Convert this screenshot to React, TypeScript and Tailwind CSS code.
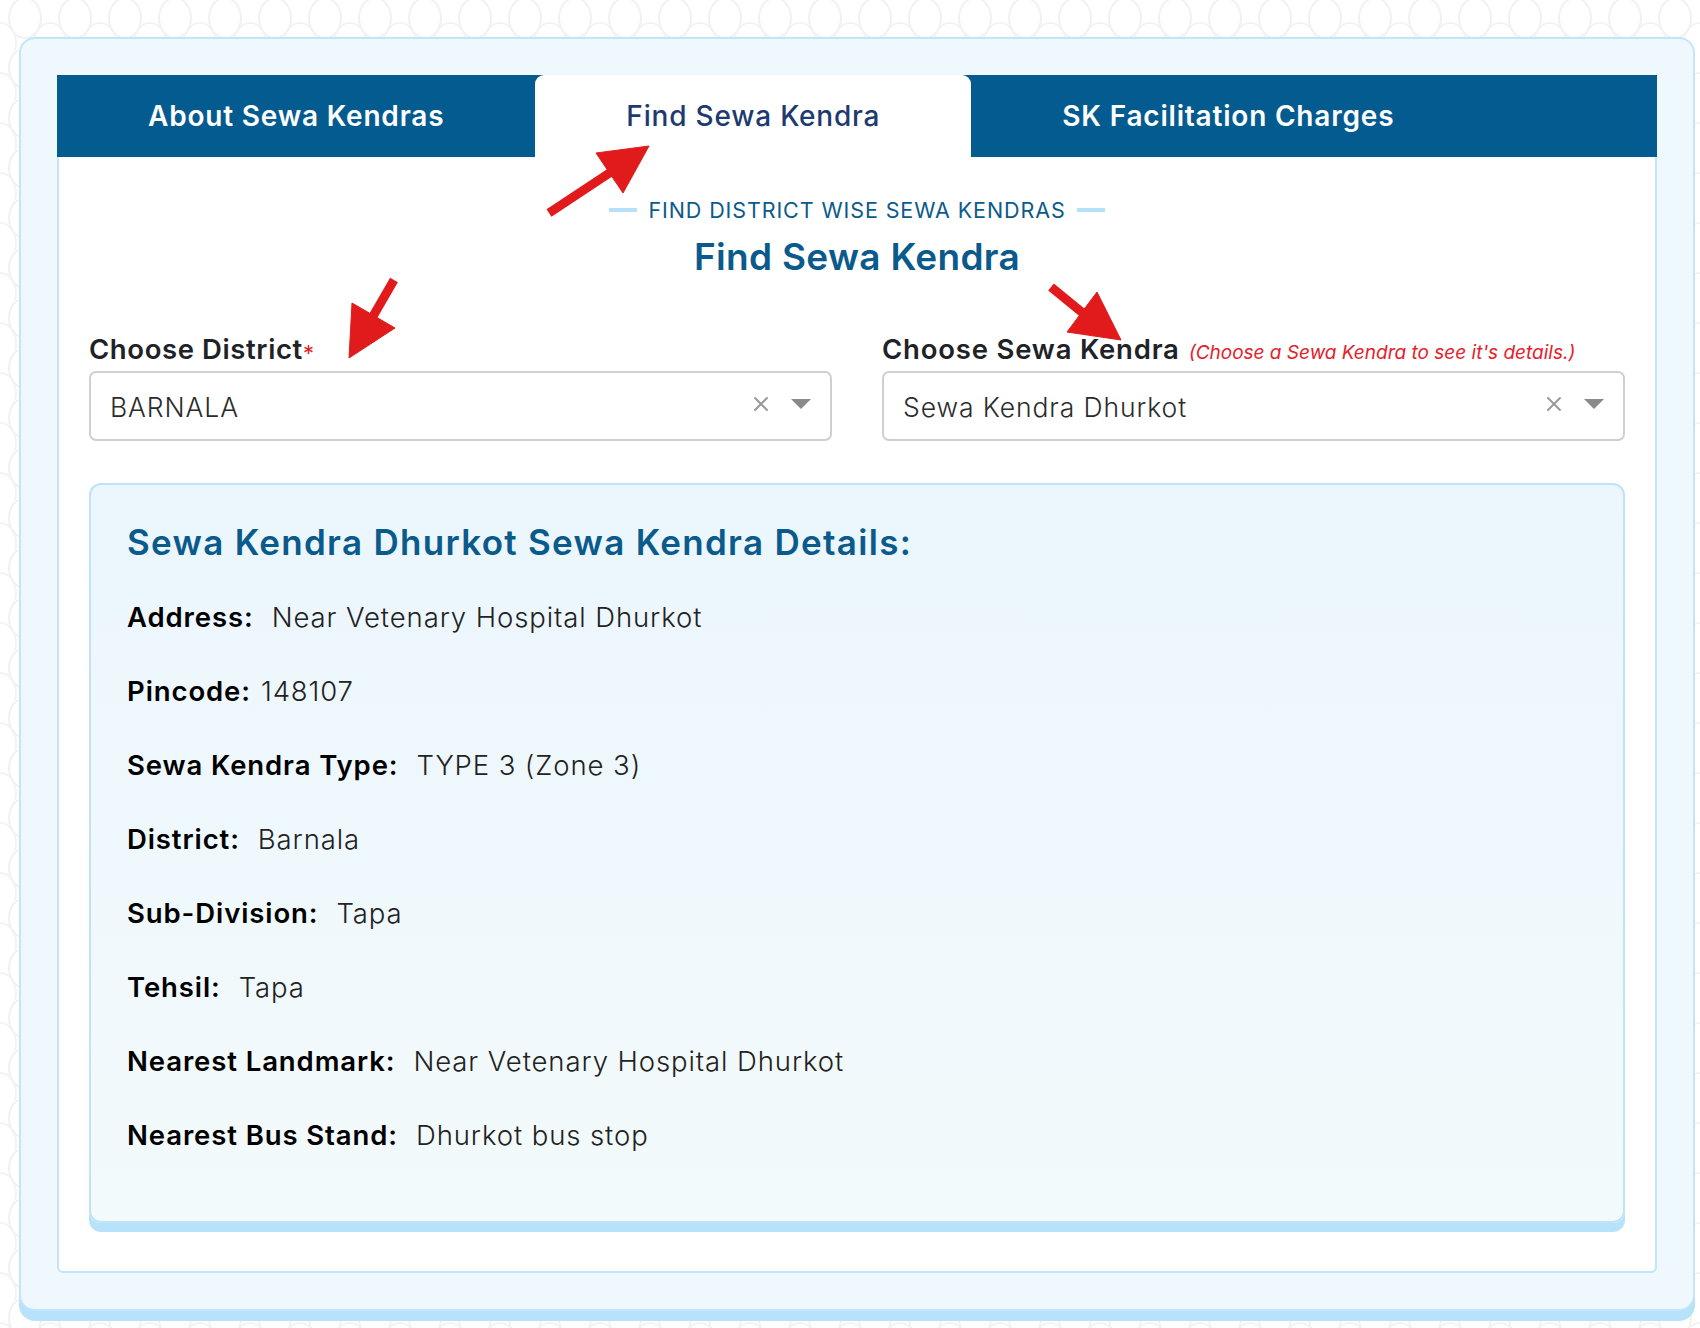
import React from 'react';

const rows = [
  { label: 'Address:', value: 'Near Vetenary Hospital Dhurkot', tight: false },
  { label: 'Pincode:', value: '148107', tight: true },
  { label: 'Sewa Kendra Type:', value: 'TYPE 3 (Zone 3)', tight: false },
  { label: 'District:', value: 'Barnala', tight: false },
  { label: 'Sub-Division:', value: 'Tapa', tight: false },
  { label: 'Tehsil:', value: 'Tapa', tight: false },
  { label: 'Nearest Landmark:', value: 'Near Vetenary Hospital Dhurkot', tight: false },
  { label: 'Nearest Bus Stand:', value: 'Dhurkot bus stop', tight: false },
];

const ClearIcon = () => (
  <svg width="16" height="16" viewBox="0 0 16 16" className="shrink-0">
    <path d="M2 2 L14 14 M14 2 L2 14" stroke="#9a9a9a" strokeWidth="2" strokeLinecap="round" />
  </svg>
);

const Caret = () => (
  <svg width="20" height="10" viewBox="0 0 20 10" className="shrink-0">
    <polygon points="0,0 20,0 10,10" fill="#8a8a8a" />
  </svg>
);

const SelectBox: React.FC<{ value: string }> = ({ value }) => (
  <div className="h-[70px] w-full rounded-[7px] border-2 border-[#cfcfcf] bg-white flex items-center pl-[19px] pr-[19px]">
    <span className="flex-1 pt-[3px] text-[26.5px] font-light text-[#2b2b2b] tracking-[0.9px]">{value}</span>
    <div className="flex items-center gap-[22px] -mt-[4px]">
      <ClearIcon />
      <Caret />
    </div>
  </div>
);

const Arrows = () => (
  <svg className="absolute left-0 top-0 pointer-events-none" width="1700" height="1328" viewBox="0 0 1700 1328">
    <g fill="#e11b1b" stroke="#e11b1b">
      <line x1="549" y1="213" x2="614" y2="170" strokeWidth="9" />
      <polygon points="596,153 649,146 623,193" strokeWidth="1" />
      <line x1="394" y1="280" x2="372" y2="318" strokeWidth="9" />
      <polygon points="352,303 395,328 349,358" strokeWidth="1" />
      <line x1="1051" y1="287" x2="1084" y2="314" strokeWidth="9" />
      <polygon points="1097,292 1067,332 1121,340" strokeWidth="1" />
    </g>
  </svg>
);

const Pattern = () => (
  <svg className="absolute inset-0 pointer-events-none" width="1700" height="1328">
    <defs>
      <pattern id="rings" width="50" height="50" patternUnits="userSpaceOnUse">
        <ellipse cx="25" cy="18" rx="16" ry="20" fill="none" stroke="#f1f1f1" strokeWidth="2" />
        <ellipse cx="0" cy="43" rx="16" ry="20" fill="none" stroke="#f3f3f3" strokeWidth="2" />
        <ellipse cx="50" cy="43" rx="16" ry="20" fill="none" stroke="#f3f3f3" strokeWidth="2" />
      </pattern>
    </defs>
    <rect width="1700" height="1328" fill="url(#rings)" />
  </svg>
);

export default function App() {
  return (
    <div className="relative w-[1700px] h-[1328px] overflow-hidden bg-white font-['Inter',sans-serif]">
      <Pattern />
      <div className="relative pt-[37px] pl-[19px] pr-[5px]">
        <div className="rounded-[16px] border-2 border-[#c2e5f9] bg-[#eff8fd] shadow-[0_10px_0_#b6e2fb] p-[36px]">
          <div className="rounded-[6px] border-2 border-[#c2e5f9] bg-white pb-[48px]">
            {/* tabs */}
            <div className="flex h-[82px] bg-[#045b8f] -mx-[2px] -mt-[2px]">
              <div className="flex items-center px-[91px] text-[28px] font-semibold text-white tracking-[0.8px]">
                About Sewa Kendras
              </div>
              <div className="flex items-center px-[91px] bg-white rounded-t-[9px] text-[28px] font-medium text-[#1e3a70] tracking-[0.8px]">
                Find Sewa Kendra
              </div>
              <div className="flex items-center px-[91px] text-[28px] font-semibold text-white tracking-[0.8px]">
                SK Facilitation Charges
              </div>
            </div>

            <div className="px-[30px] pt-[38px]">
              <div className="flex items-center justify-center gap-[11px] h-[30px]">
                <span className="w-[28px] h-[4px] bg-[#b5e0f8]" />
                <span className="text-[21.5px] text-[#0b5a8c] tracking-[0.9px]">FIND DISTRICT WISE SEWA KENDRAS</span>
                <span className="w-[28px] h-[4px] bg-[#b5e0f8]" />
              </div>
              <h2 className="mt-[9px] h-[46px] leading-[46px] text-center text-[37px] font-semibold text-[#0b5a8c] tracking-[0.3px]">
                Find Sewa Kendra
              </h2>

              <div className="mt-[52px] grid grid-cols-2 gap-[50px]">
                <div>
                  <div className="h-[38px] flex items-end mb-[1px] text-[27.5px] font-semibold text-[#1f2328] tracking-[0.6px]">
                    Choose District<span className="text-[#e5202a] font-normal text-[22px] self-start mt-[5px]">*</span>
                  </div>
                  <SelectBox value="BARNALA" />
                </div>
                <div>
                  <div className="h-[38px] flex items-end gap-[9px] mb-[1px]">
                    <span className="text-[27.5px] font-semibold text-[#1f2328] tracking-[0.8px]">Choose Sewa Kendra</span>
                    <span className="text-[19px] italic text-[#e5202a] pb-[3px]">(Choose a Sewa Kendra to see it's details.)</span>
                  </div>
                  <SelectBox value="Sewa Kendra Dhurkot" />
                </div>
              </div>

              <div className="mt-[42px] rounded-[12px] border-2 border-[#bfe3f7] bg-linear-to-b from-[#ebf6fd] to-[#f3fafb] shadow-[0_9px_0_#b6e2fb] pl-[36px] pr-[36px] pt-[34px] pb-[65px]">
                <h3 className="h-[46px] leading-[46px] text-[35px] font-semibold text-[#0b5a8c] tracking-[1.3px]">
                  Sewa Kendra Dhurkot Sewa Kendra Details:
                </h3>
                <div className="mt-[33px] flex flex-col gap-[34px]">
                  {rows.map((r) => (
                    <p key={r.label} className="h-[40px] flex items-center text-[27.5px] tracking-[0.9px]">
                      <span className="font-semibold text-black">{r.label}</span>
                      <span className={`${r.tight ? 'ml-[10px]' : 'ml-[18px]'} font-light text-[#222]`}>{r.value}</span>
                    </p>
                  ))}
                </div>
              </div>
            </div>
          </div>
        </div>
      </div>
      <Arrows />
    </div>
  );
}
